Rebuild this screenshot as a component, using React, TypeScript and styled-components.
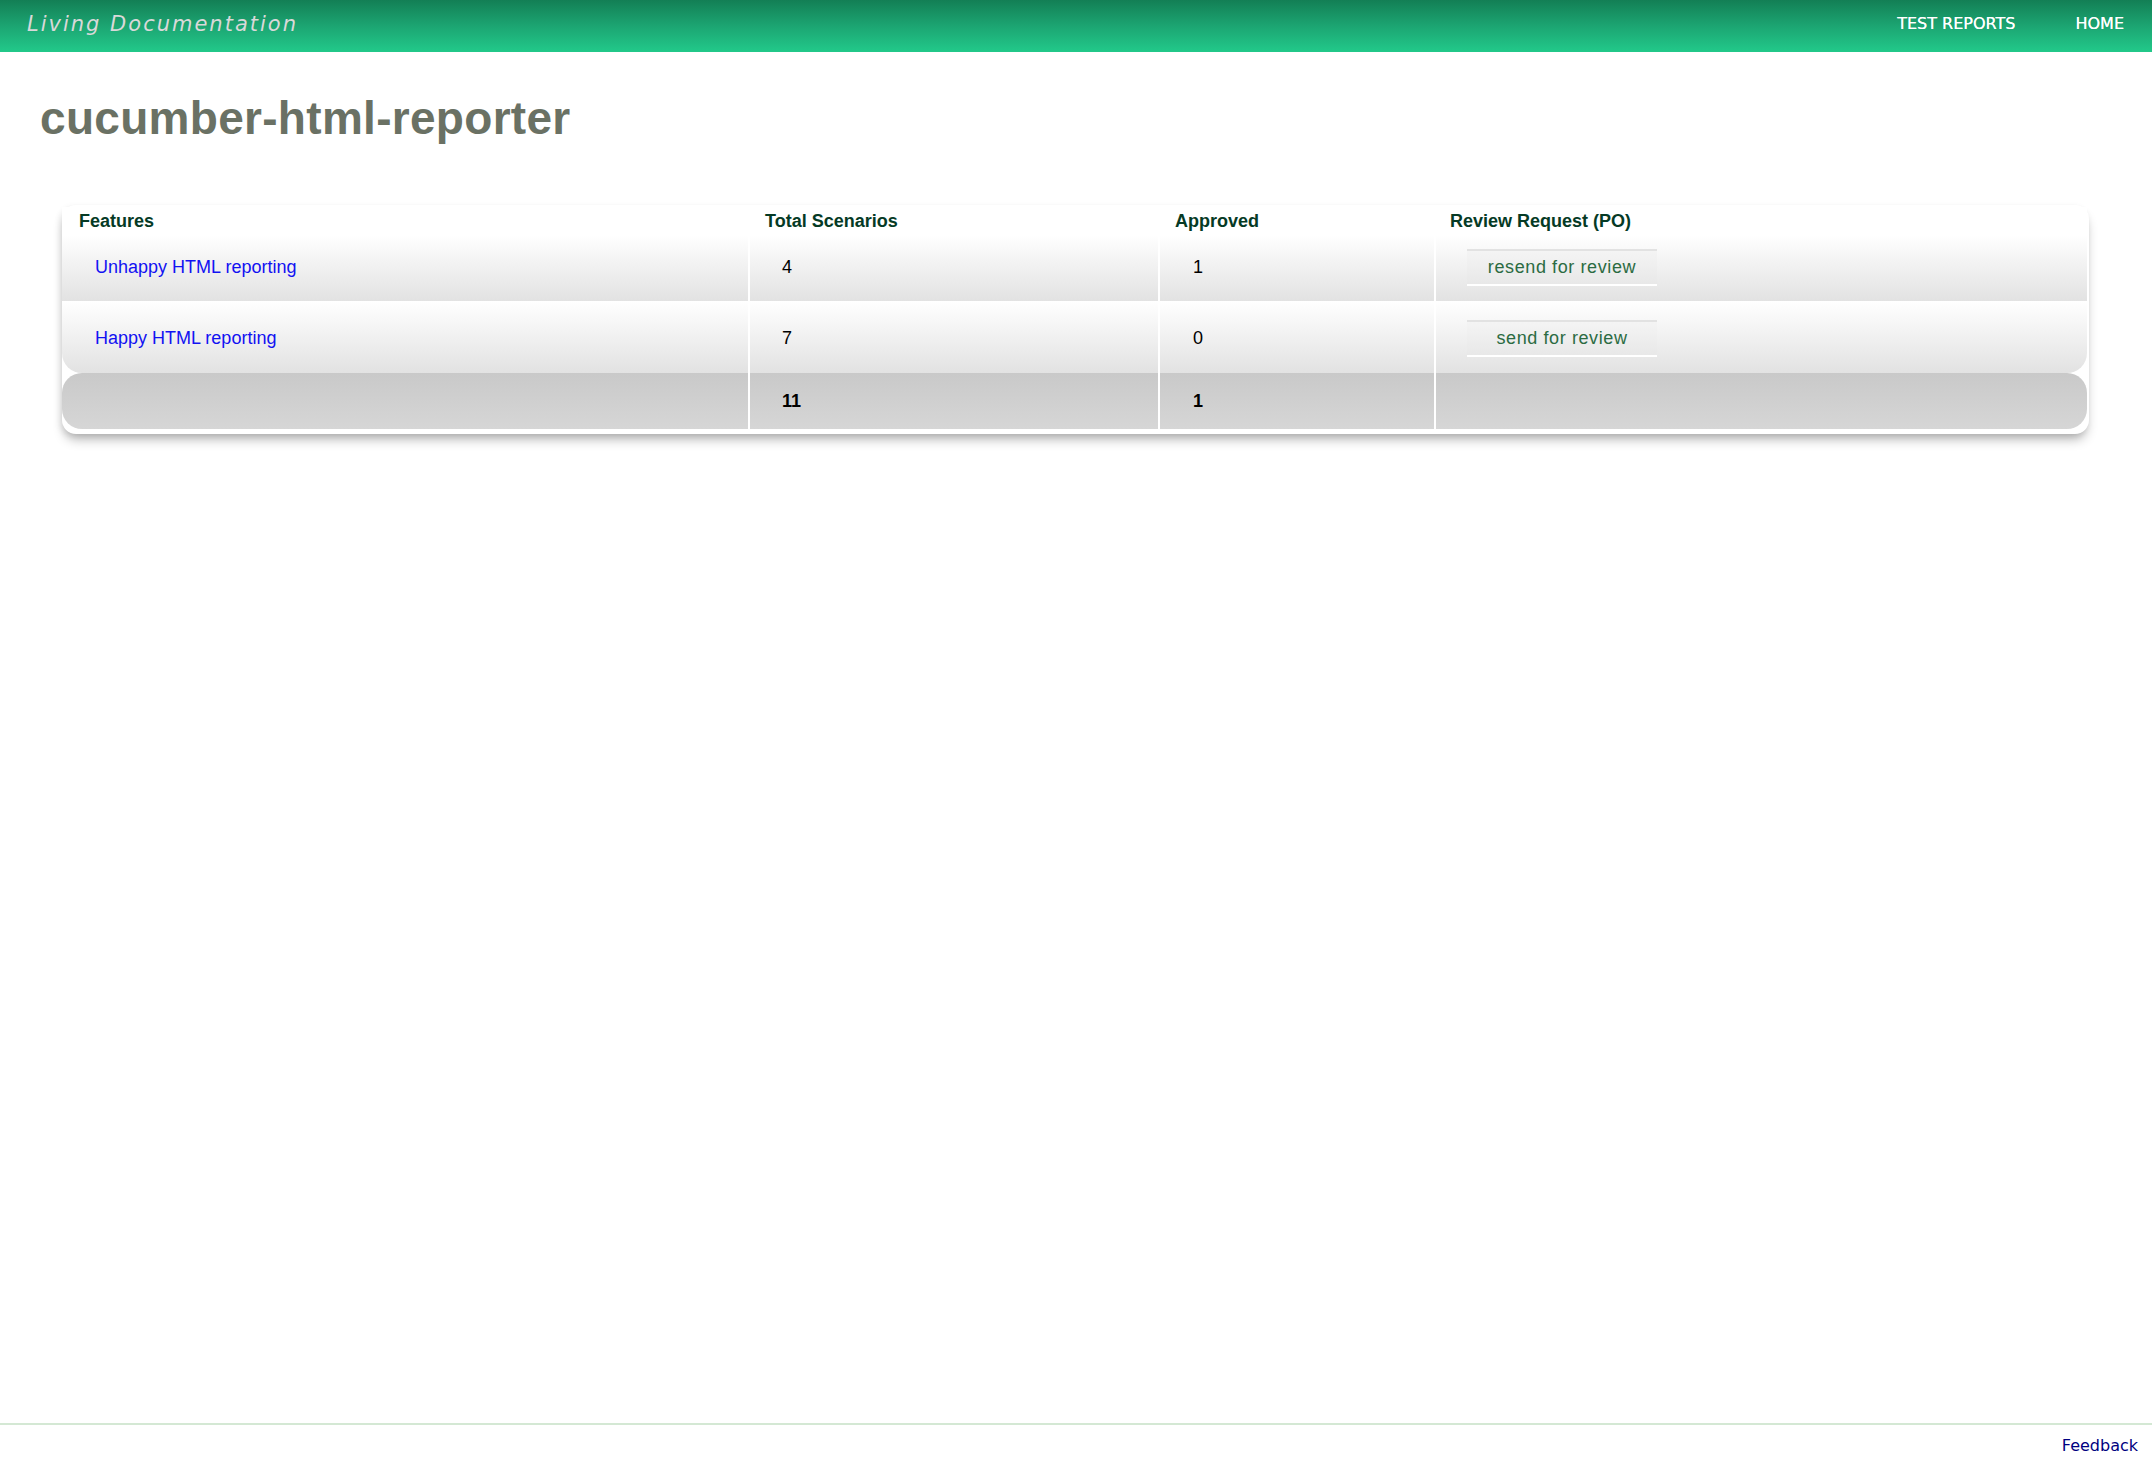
import React from 'react';
import styled, { createGlobalStyle } from 'styled-components';

const GlobalStyle = createGlobalStyle`
  html, body {
    margin: 0;
    padding: 0;
    background: #ffffff;
  }
  body {
    font-family: "Liberation Sans", Arial, sans-serif;
  }
`;

const Page = styled.div`
  display: flex;
  flex-direction: column;
  min-height: 100vh;
`;

const TopBar = styled.header`
  display: flex;
  align-items: center;
  justify-content: space-between;
  height: 52px;
  box-sizing: border-box;
  padding: 0 28px 5px 27px;
  background: linear-gradient(to bottom, #137f55 0%, #1ca572 50%, #22c98a 100%);
`;

const Brand = styled.span`
  font-family: "DejaVu Sans", Verdana, sans-serif;
  font-style: italic;
  font-size: 21px;
  letter-spacing: 2px;
  color: #d9d9d9;
`;

const Nav = styled.nav`
  display: flex;
  gap: 60px;
`;

const NavLink = styled.a`
  font-family: "DejaVu Sans", Verdana, sans-serif;
  font-size: 16px;
  color: #ffffff;
  text-decoration: none;
  text-shadow: 0 0 0.6px #ffffff;
  cursor: pointer;
`;

const Main = styled.main`
  flex: 1;
  padding: 0 40px;
`;

const Title = styled.h1`
  margin: 43px 0 64px;
  font-family: "Liberation Sans", Arial, sans-serif;
  font-size: 46px;
  line-height: 46px;
  letter-spacing: 0.3px;
  font-weight: bold;
  color: #6a7164;
`;

const Board = styled.div`
  margin: 0 23px 0 22px;
  padding: 2px 2px 5px 0;
  background: #ffffff;
  border-radius: 14px;
  box-shadow: 0 8px 12px -3px rgba(0, 0, 0, 0.3), -2px 2px 6px rgba(0, 0, 0, 0.08);
`;

const Row = styled.div<{ $h: number; $kind: 'head' | 'body' | 'total'; $roundBottom?: boolean }>`
  display: grid;
  grid-template-columns: 686px 410px 276px 1fr;
  height: ${(p) => p.$h}px;
  background: ${(p) =>
    p.$kind === 'head'
      ? '#ffffff'
      : p.$kind === 'total'
      ? 'linear-gradient(to bottom, #c9c9c9 0%, #d6d6d6 100%)'
      : 'linear-gradient(to bottom, #ffffff 0%, #e2e2e2 100%)'};
  border-radius: ${(p) =>
    p.$kind === 'total' ? '20px' : p.$roundBottom ? '0 0 20px 20px' : '0'};
  overflow: hidden;
`;

const Cell = styled.div<{ $head?: boolean; $pad?: number; $bold?: boolean; $shift?: number }>`
  display: flex;
  align-items: center;
  box-sizing: border-box;
  padding-left: ${(p) => (p.$pad !== undefined ? p.$pad : p.$head ? 16 : 32)}px;
  padding-top: ${(p) => Math.max(p.$shift || 0, 0)}px;
  padding-bottom: ${(p) => Math.max(-(p.$shift || 0), 0)}px;
  font-family: "Liberation Sans", Arial, sans-serif;
  font-size: 18px;
  font-weight: ${(p) => (p.$head || p.$bold ? 'bold' : 'normal')};
  color: ${(p) => (p.$head ? '#053a25' : '#000000')};

  & + & {
    border-left: 2px solid #ffffff;
  }
`;

const FeatureLink = styled.a`
  color: #1212f2;
  text-decoration: none;
  cursor: pointer;
`;

const ReviewButton = styled.button`
  width: 190px;
  height: 37px;
  box-sizing: border-box;
  border: none;
  border-top: 2px solid #e2e2e2;
  border-bottom: 2px solid #ffffff;
  background: linear-gradient(to bottom, #f4f4f4 0%, #e8e8e8 100%);
  font-family: "Liberation Sans", Arial, sans-serif;
  font-size: 18px;
  letter-spacing: 0.6px;
  color: #2b6b42;
  cursor: pointer;
  padding: 0;
`;

const Footer = styled.footer`
  display: flex;
  align-items: center;
  justify-content: flex-end;
  height: 41px;
  box-sizing: border-box;
  border-top: 2px solid #d4e8d4;
  padding: 2px 14px 0 0;
`;

const FeedbackLink = styled.a`
  font-family: "DejaVu Sans", Verdana, sans-serif;
  font-size: 16px;
  color: #000080;
  text-decoration: none;
  cursor: pointer;
`;

type Feature = {
  name: string;
  total: number;
  approved: number;
  action: string;
  height: number;
  shift: number;
};

const features: Feature[] = [
  { name: 'Unhappy HTML reporting', total: 4, approved: 1, action: 'resend for review', height: 66, shift: -1 },
  { name: 'Happy HTML reporting', total: 7, approved: 0, action: 'send for review', height: 72, shift: 2 },
];

const App = () => {
  const total = features.reduce((s, f) => s + f.total, 0);
  const approved = features.reduce((s, f) => s + f.approved, 0);

  return (
    <Page>
      <GlobalStyle />
      <TopBar>
        <Brand>Living Documentation</Brand>
        <Nav>
          <NavLink>TEST REPORTS</NavLink>
          <NavLink>HOME</NavLink>
        </Nav>
      </TopBar>
      <Main>
        <Title>cucumber-html-reporter</Title>
        <Board>
          <Row $h={28} $kind="head">
            <Cell $head $pad={17}>Features</Cell>
            <Cell $head $pad={15}>Total Scenarios</Cell>
            <Cell $head $pad={15}>Approved</Cell>
            <Cell $head $pad={14}>Review Request (PO)</Cell>
          </Row>
          {features.map((f, i) => (
            <Row key={f.name} $h={f.height} $kind="body" $roundBottom={i === features.length - 1}>
              <Cell $pad={33} $shift={f.shift}>
                <FeatureLink>{f.name}</FeatureLink>
              </Cell>
              <Cell $shift={f.shift}>{f.total}</Cell>
              <Cell $pad={33} $shift={f.shift}>{f.approved}</Cell>
              <Cell $pad={31} $shift={f.shift}>
                <ReviewButton>{f.action}</ReviewButton>
              </Cell>
            </Row>
          ))}
          <Row $h={56} $kind="total">
            <Cell />
            <Cell $bold>{total}</Cell>
            <Cell $bold $pad={33}>{approved}</Cell>
            <Cell />
          </Row>
        </Board>
      </Main>
      <Footer>
        <FeedbackLink>Feedback</FeedbackLink>
      </Footer>
    </Page>
  );
};

export default App;
